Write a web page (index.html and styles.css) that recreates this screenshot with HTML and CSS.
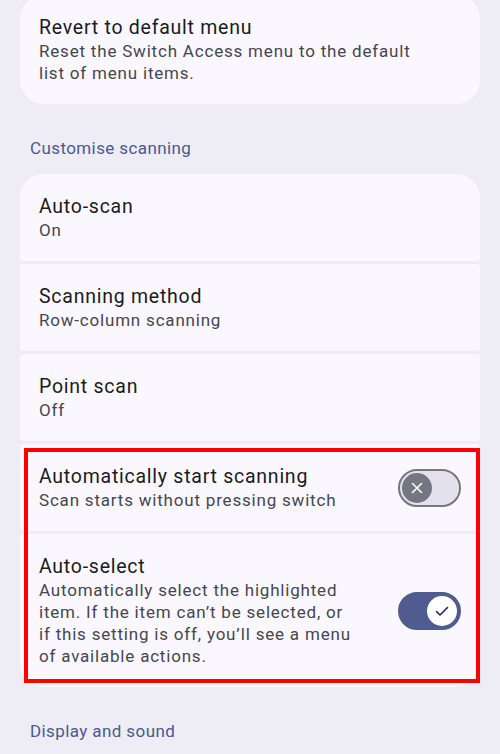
FILE: index.html
```html
<!DOCTYPE html>
<html lang="en">
<head>
    <meta charset="UTF-8">
    <meta name="viewport" content="width=device-width, initial-scale=1.0">
    <title>Switch Access settings</title>
    <link rel="stylesheet" href="styles.css">
</head>
<body>
    <div class="card top-card">
        <div class="item">
            <div class="text">
                <div class="title">Revert to default menu</div>
                <div class="summary">Reset the Switch Access menu to the default<br>list of menu items.</div>
            </div>
        </div>
    </div>

    <h2 class="section">Customise scanning</h2>
    <div class="group">
        <div class="item">
            <div class="text">
                <div class="title">Auto-scan</div>
                <div class="summary">On</div>
            </div>
        </div>
        <div class="item">
            <div class="text">
                <div class="title">Scanning method</div>
                <div class="summary">Row-column scanning</div>
            </div>
        </div>
        <div class="item">
            <div class="text">
                <div class="title">Point scan</div>
                <div class="summary">Off</div>
            </div>
        </div>
        <div class="highlight">
            <div class="item">
                <div class="text">
                    <div class="title">Automatically start scanning</div>
                    <div class="summary">Scan starts without pressing switch</div>
                </div>
                <div class="switch">
                    <span class="thumb">
                        <svg width="14" height="14" viewBox="0 0 14 14">
                            <path d="M2.5 2.5 L11.5 11.5 M11.5 2.5 L2.5 11.5" stroke="#fff" stroke-width="1.6" stroke-linecap="round" fill="none"/>
                        </svg>
                    </span>
                </div>
            </div>
            <div class="item">
                <div class="text">
                    <div class="title">Auto-select</div>
                    <div class="summary">Automatically select the highlighted<br>item. If the item can’t be selected, or<br>if this setting is off, you’ll see a menu<br>of available actions.</div>
                </div>
                <div class="switch on">
                    <span class="thumb">
                        <svg width="16" height="16" viewBox="0 0 16 16">
                            <path d="M2.5 8.5 L6 12 L13.5 4.5" stroke="#1d2a5c" stroke-width="1.6" stroke-linecap="round" stroke-linejoin="round" fill="none"/>
                        </svg>
                    </span>
                </div>
            </div>
        </div>
    </div>

    <h2 class="section">Display and sound</h2>
</body>
</html>
```

FILE: styles.css
```css
body {
    margin: 0;
    background-color: #eeedf5;
    font-family: Roboto, "Noto Sans", sans-serif;
    color: #1b1b21;
}
.card {
    margin: 0 20px;
}
.top-card {
    margin-top: -5px;
}
.top-card .item {
    border-radius: 24px;
    padding-top: 21px;
}
.group {
    margin: 0 20px;
    display: flex;
    flex-direction: column;
    gap: 3px;
}
.item {
    background-color: #faf8fe;
    border-radius: 4px;
    padding: 21px 19px 20px;
    display: flex;
    align-items: center;
    justify-content: space-between;
    gap: 20px;
}
.group > .item:first-child {
    border-radius: 24px 24px 4px 4px;
}
.highlight {
    position: relative;
    display: flex;
    flex-direction: column;
    gap: 3px;
}
.highlight .item:last-child {
    border-radius: 4px 4px 24px 24px;
}
/* red frame drawn over the last two rows */
.highlight::after {
    content: "";
    position: absolute;
    top: 4px;
    right: 0;
    bottom: 4px;
    left: 4px;
    border: 4px solid #ff0000;
    pointer-events: none;
}
.title {
    font-size: 19.5px;
    line-height: 24px;
    letter-spacing: 0.75px;
    color: #1b1b21;
}
.summary {
    font-size: 17px;
    line-height: 22px;
    letter-spacing: 0.8px;
    color: #46464f;
}
.section {
    margin: 32px 30px 14px;
    font-size: 17px;
    line-height: 24px;
    letter-spacing: 0.4px;
    font-weight: normal;
    color: #4a5a8e;
}
.switch {
    flex-shrink: 0;
    width: 63px;
    height: 38px;
    box-sizing: border-box;
    border-radius: 19px;
    border: 2.5px solid #767680;
    background-color: #e3e1ec;
    display: flex;
    align-items: center;
    padding: 0 2px;
}
.switch .thumb {
    width: 30px;
    height: 30px;
    border-radius: 50%;
    background-color: #767680;
    display: flex;
    align-items: center;
    justify-content: center;
}
.switch.on {
    border-color: #505c8f;
    background-color: #505c8f;
    justify-content: flex-end;
}
.switch.on .thumb {
    background-color: #ffffff;
}
```
